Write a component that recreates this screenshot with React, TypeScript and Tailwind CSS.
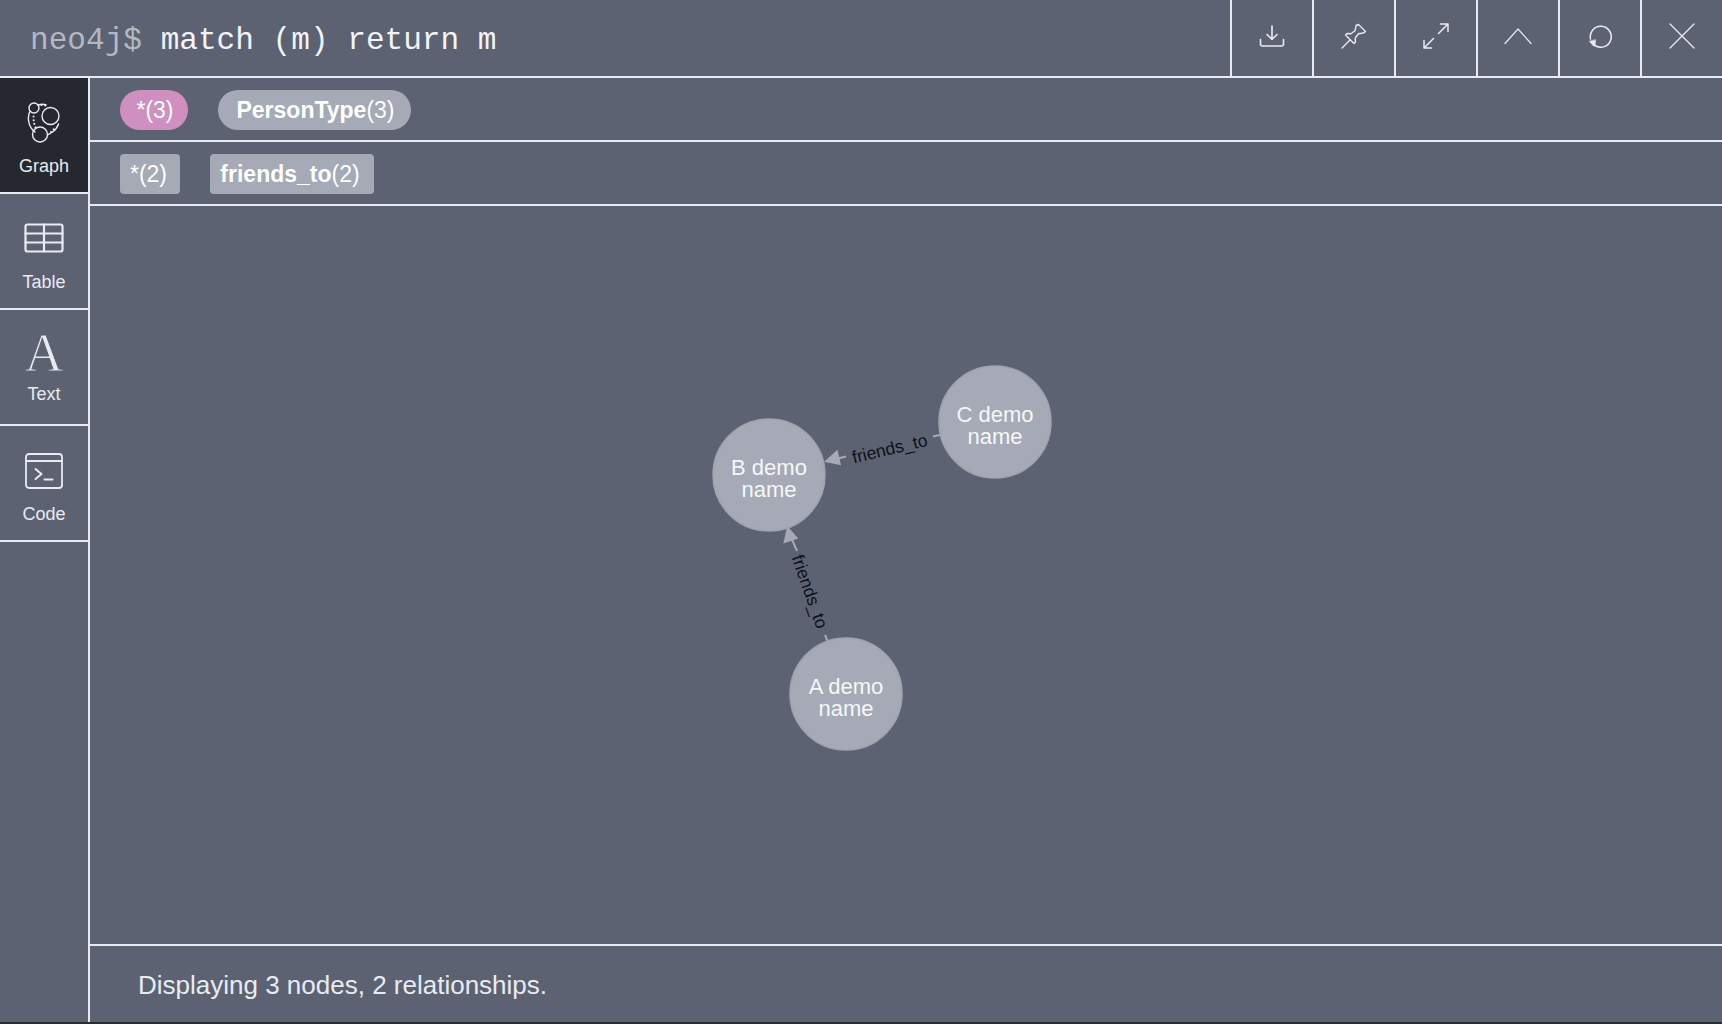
import type { ReactNode } from "react";

const sans = "font-['Liberation_Sans',Arial,sans-serif]";

function ToolButton({ children }: { children: ReactNode }) {
  return (
    <button className="flex h-full w-[82px] items-center justify-center border-l-2 border-[#e8ebf1] pb-[4px] text-[#e8ebf1]">
      {children}
    </button>
  );
}

function SideItem({
  icon,
  label,
  labelClass = "mt-[10px]",
  iconClass = "",
  active,
}: {
  icon: ReactNode;
  label: string;
  labelClass?: string;
  iconClass?: string;
  active?: boolean;
}) {
  return (
    <div
      className={`flex h-[116px] flex-col items-center border-b-2 border-[#e8ebf1] pt-[23px] text-[18px] leading-[22px] text-[#e8ebf1] ${
        active ? "bg-[#25282f]" : ""
      }`}
    >
      <div className={`flex h-[44px] items-center justify-center ${iconClass}`}>{icon}</div>
      <span className={labelClass}>{label}</span>
    </div>
  );
}

const iconProps = {
  fill: "none",
  stroke: "currentColor",
  strokeLinecap: "round" as const,
  strokeLinejoin: "round" as const,
};

function DownloadIcon() {
  return (
    <svg width="26" height="24" viewBox="0 0 26 24" strokeWidth="1.6" {...iconProps}>
      <path d="M13 2v13M8 10.500l5 5 5-5" />
      <path d="M1.500 15.500v4.500a2 2 0 0 0 2 2h19a2 2 0 0 0 2-2v-4.500" />
    </svg>
  );
}

function PinIcon() {
  return (
    <svg width="26" height="26" viewBox="0 0 26 26" strokeWidth="1.4" {...iconProps}>
      <path d="M1 25l8-8" />
      <path d="M17.500 1.500l7 7-2 1.500-5 .8-3.300 4.200.3 4-1.500 1.500-8.500-8.500 1.500-1.500 4 .3 4.200-3.300.8-5z" />
    </svg>
  );
}

function ExpandIcon() {
  return (
    <svg width="26" height="26" viewBox="0 0 26 26" strokeWidth="1.5" {...iconProps}>
      <path d="M15.500 10.500L25 1M17.500 1H25v7.500" />
      <path d="M10.500 15.500L1 25M1 17.500V25h7.500" />
    </svg>
  );
}

function ChevronUpIcon() {
  return (
    <svg width="28" height="18" viewBox="0 0 28 18" strokeWidth="1.200" {...iconProps}>
      <path d="M1 16.500L14 2l13 14.500" />
    </svg>
  );
}

function RefreshIcon() {
  return (
    <svg width="24" height="24" viewBox="0 0 24 24" strokeWidth="1.500" {...iconProps}>
      <path d="M2.500 15A10.500 10.500 0 1 1 7 21.500" />
      <path d="M1.500 17.500l4 4.500h1.500l.5-6z" fill="currentColor" strokeWidth="0.6" />
    </svg>
  );
}

function CloseIcon() {
  return (
    <svg width="26" height="26" viewBox="0 0 26 26" strokeWidth="1.3" {...iconProps}>
      <path d="M1 1l24 24M25 1L1 25" />
    </svg>
  );
}

function GraphIcon() {
  return (
    <svg width="34" height="42" viewBox="0 0 34 42" strokeWidth="1.400" {...iconProps}>
      <path d="M11 3c3-1 6-1 8 0M3 9C0 15 1 25 8 30M31.500 22c-1 3-3 6-6 8-2 1.500-3 2-4.500 2.500" />
      <circle cx="7" cy="6" r="5" />
      <circle cx="23.500" cy="14" r="8.500" />
      <circle cx="13" cy="32.500" r="7.500" />
      <path d="M6.500 14.500c0 4 .5 8 2.500 12M14.500 3l4.500.5M24 30l3-3" strokeDasharray="0.1 3.600" strokeWidth="2" />
    </svg>
  );
}

function TableIcon() {
  return (
    <svg width="40" height="30" viewBox="0 0 40 30" strokeWidth="2.200" {...iconProps}>
      <rect x="1.500" y="1.500" width="37" height="27" rx="2" />
      <path d="M1.500 10.500h37M1.500 19.500h37M20 1.500v27" />
    </svg>
  );
}

function CodeIcon() {
  return (
    <svg width="38" height="36" viewBox="0 0 38 36" strokeWidth="1.800" {...iconProps}>
      <rect x="1" y="1" width="36" height="34" rx="3" />
      <path d="M1 8h36" />
      <path d="M10.500 16l6 5-6 5" strokeWidth="2" />
      <path d="M19.500 26.500h8" strokeWidth="2" />
    </svg>
  );
}

type GraphNode = { x: number; y: number; lines: [string, string] };

const nodes: GraphNode[] = [
  { x: 769, y: 475, lines: ["B demo", "name"] },
  { x: 995, y: 422, lines: ["C demo", "name"] },
  { x: 846, y: 694, lines: ["A demo", "name"] },
];

function GraphCanvas() {
  return (
    <svg className="h-full w-full" viewBox="90 206 1632 738">
      {/* C -> B */}
      <path d="M933 436.500l7-1.500M829 460.500l17-4" stroke="#a5aab6" strokeWidth="2" fill="none" />
      <path d="M824 461.700l13.500-12 3.500 15.500z" fill="#a5aab6" />
      <text
        transform="translate(890 450) rotate(-13.400)"
        textAnchor="middle"
        dominantBaseline="middle"
        fontSize="17.500"
        fill="#0d1018"
      >
        friends_to
      </text>
      {/* A -> B */}
      <path d="M825 635l2.500 6M790 535l7 16" stroke="#a5aab6" strokeWidth="2" fill="none" />
      <path d="M787.300 526l11 12.500-15 5z" fill="#a5aab6" />
      <text
        transform="translate(808.500 592) rotate(70.600)"
        textAnchor="middle"
        dominantBaseline="middle"
        fontSize="17.500"
        fill="#0d1018"
      >
        friends_to
      </text>
      {nodes.map((node) => (
        <g key={node.lines[0]}>
          <circle cx={node.x} cy={node.y} r="56" fill="#a5aab6" stroke="#9ea3b0" strokeWidth="1.500" />
          <text x={node.x} y={node.y} textAnchor="middle" fontSize="22" fill="#f6f7f9">
            {node.lines[0]}
          </text>
          <text x={node.x} y={node.y + 22} textAnchor="middle" fontSize="22" fill="#f6f7f9">
            {node.lines[1]}
          </text>
        </g>
      ))}
    </svg>
  );
}

export default function App() {
  return (
    <div className={`flex h-screen w-full flex-col overflow-hidden border-b-2 border-[#2a2d33] bg-[#5c6271] ${sans}`}>
      {/* query bar */}
      <div className="flex h-[78px] shrink-0 items-stretch justify-between border-b-2 border-[#e8ebf1]">
        <div className="pl-[30px] pt-[21px] font-['Liberation_Mono',monospace] text-[31.100px] leading-[40px] text-[#f2f4f8]">
          <span className="text-[#b3b8c3]">neo4j$</span> match (m) return m
        </div>
        <div className="flex">
          <ToolButton><DownloadIcon /></ToolButton>
          <ToolButton><PinIcon /></ToolButton>
          <ToolButton><ExpandIcon /></ToolButton>
          <ToolButton><ChevronUpIcon /></ToolButton>
          <ToolButton><RefreshIcon /></ToolButton>
          <ToolButton><CloseIcon /></ToolButton>
        </div>
      </div>

      <div className="flex min-h-0 flex-1">
        {/* view tabs */}
        <div className="w-[90px] shrink-0 border-r-2 border-[#e8ebf1]">
          <SideItem active icon={<GraphIcon />} label="Graph" />
          <SideItem icon={<TableIcon />} label="Table" iconClass="-mt-[1px]" labelClass="mt-[11px]" />
          <SideItem
            icon={
              <span className="font-['Liberation_Serif',serif] text-[54px] leading-[44px] font-normal [-webkit-text-stroke:1px_#5c6271]">
                A
              </span>
            }
            label="Text"
            iconClass="-mt-[2px]"
            labelClass="mt-[8px]"
          />
          <SideItem icon={<CodeIcon />} label="Code" />
        </div>

        <div className="flex min-w-0 flex-1 flex-col">
          {/* legends */}
          <div className="flex h-[64px] shrink-0 items-center gap-[30px] border-b-2 border-[#e8ebf1] pt-[2px] pl-[30px] text-[23px] text-white">
            <span className="flex h-[40px] w-[68px] items-center justify-center rounded-full bg-[#cf8fc0] pl-[2px]">*(3)</span>
            <span className="flex h-[40px] w-[193px] items-center justify-center rounded-full bg-[#a5aab6] pl-[2px]">
              <b>PersonType</b>(3)
            </span>
          </div>
          <div className="flex h-[64px] shrink-0 items-center gap-[30px] border-b-2 border-[#e8ebf1] pt-[2px] pl-[30px] text-[23px] text-white">
            <span className="flex h-[40px] w-[60px] items-center justify-center rounded-[4px] bg-[#a5aab6] pr-[3px]">*(2)</span>
            <span className="flex h-[40px] w-[164px] items-center justify-center rounded-[4px] bg-[#a5aab6] pr-[4px]">
              <b>friends_to</b>(2)
            </span>
          </div>

          <div className="min-h-0 flex-1">
            <GraphCanvas />
          </div>

          {/* status */}
          <div className="flex h-[78px] shrink-0 items-center border-t-2 border-[#e8ebf1] pt-[2px] pl-[48px] text-[26px] text-[#e8ebf1]">
            Displaying 3 nodes, 2 relationships.
          </div>
        </div>
      </div>
    </div>
  );
}
